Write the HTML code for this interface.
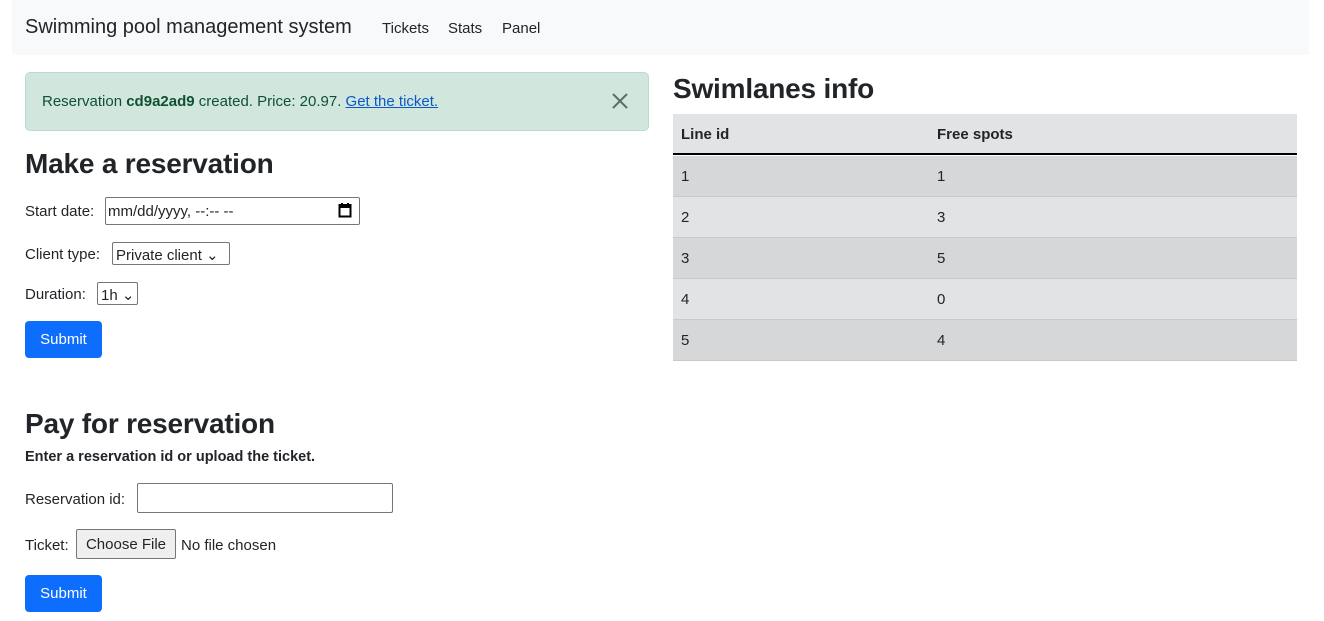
<!DOCTYPE html>
<html><head><meta charset="utf-8"><style>
body{margin:0;width:1324px;height:621px;background:#fff;font-family:"Liberation Sans","DejaVu Sans",sans-serif;color:#212529;position:relative;overflow:hidden;font-size:15px}
.a{position:absolute;white-space:nowrap}
.nav{left:12px;top:0;width:1297px;height:55px;background:#f8f9fa}
h2{margin:0;font-weight:bold;font-size:28px;position:absolute;white-space:nowrap;letter-spacing:-0.2px}
.btn{background:#0d6efd;color:#fff;border-radius:4px;width:77px;height:37px;line-height:38px;text-align:center;font-size:15px}
.box{border:1px solid #767676;border-radius:2px;background:#fff;box-sizing:border-box}
.row{position:absolute;left:673px;width:624px;height:41px;line-height:42px;border-bottom:1px solid #c9cacc;box-sizing:border-box}
.row span{position:absolute}
</style></head><body>
<div class="a nav"></div>
<div class="a" style="left:25px;top:16px;font-size:20px;">Swimming pool management system</div>
<div class="a" style="left:382px;top:20px;">Tickets</div>
<div class="a" style="left:448px;top:20px;">Stats</div>
<div class="a" style="left:502px;top:20px;">Panel</div>

<div class="a" style="left:25px;top:72px;width:624px;height:59px;background:#d1e7dd;border:1px solid #badbcc;border-radius:5px;box-sizing:border-box"></div>
<div class="a" style="left:42px;top:93px;color:#0f5132;">Reservation <b>cd9a2ad9</b> created. Price: 20.97. <span style="color:#0a58ca;text-decoration:underline">Get the ticket.</span></div>
<svg class="a" style="left:611px;top:92px" width="18" height="18" viewBox="0 0 18 18"><path d="M2 2L16 16M16 2L2 16" stroke="#5d6d66" stroke-width="2"/></svg>

<h2 style="left:25px;top:148px;">Make a reservation</h2>
<div class="a" style="left:25px;top:203px;">Start date:</div>
<div class="a box" style="left:105px;top:197px;width:255px;height:28px;"></div>
<div class="a" style="left:108px;top:203px;">mm/dd/yyyy, --:-- --</div>
<svg class="a" style="left:338px;top:202px" width="14" height="16" viewBox="0 0 14 16"><rect x="1.5" y="3" width="11" height="11.5" fill="none" stroke="#000" stroke-width="2"/><rect x="1" y="3" width="12" height="3" fill="#000"/><path d="M4 1v3M10 1v3" stroke="#000" stroke-width="2"/></svg>
<div class="a" style="left:25px;top:246px;">Client type:</div>
<div class="a box" style="left:112px;top:242px;width:118px;height:23px;"></div>
<div class="a" style="left:116px;top:246px;">Private client ⌄</div>
<div class="a" style="left:25px;top:286px;">Duration:</div>
<div class="a box" style="left:97px;top:282px;width:41px;height:23px;"></div>
<div class="a" style="left:101px;top:286px;">1h ⌄</div>
<div class="a btn" style="left:25px;top:321px;">Submit</div>

<h2 style="left:25px;top:408px;">Pay for reservation</h2>
<div class="a" style="left:25px;top:449px;font-weight:bold;font-size:14.5px;">Enter a reservation id or upload the ticket.</div>
<div class="a" style="left:25px;top:491px;">Reservation id:</div>
<div class="a box" style="left:137px;top:483px;width:256px;height:30px;"></div>
<div class="a" style="left:25px;top:537px;">Ticket:</div>
<div class="a" style="left:76px;top:529px;width:100px;height:30px;background:#efefef;border:1px solid #767676;border-radius:2px;box-sizing:border-box;line-height:30px;text-align:center;">Choose File</div>
<div class="a" style="left:181px;top:537px;">No file chosen</div>
<div class="a btn" style="left:25px;top:575px;">Submit</div>

<h2 style="left:673px;top:73px;">Swimlanes info</h2>
<div class="row" style="top:114px;background:#e2e3e5;border-bottom:2px solid #000;font-weight:bold;"><span style="left:8px">Line id</span><span style="left:264px">Free spots</span></div>
<div class="row" style="top:156px;background:#d6d7d9;"><span style="left:8px">1</span><span style="left:264px">1</span></div>
<div class="row" style="top:197px;background:#e2e3e5;"><span style="left:8px">2</span><span style="left:264px">3</span></div>
<div class="row" style="top:238px;background:#d6d7d9;"><span style="left:8px">3</span><span style="left:264px">5</span></div>
<div class="row" style="top:279px;background:#e2e3e5;"><span style="left:8px">4</span><span style="left:264px">0</span></div>
<div class="row" style="top:320px;background:#d6d7d9;"><span style="left:8px">5</span><span style="left:264px">4</span></div>
</body></html>
